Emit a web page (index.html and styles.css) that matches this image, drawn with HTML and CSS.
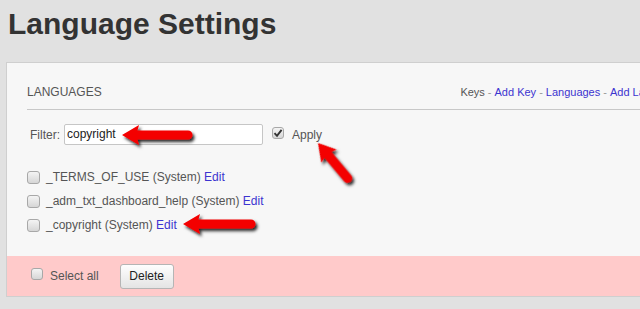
FILE: index.html
```html
<!DOCTYPE html>
<html>
<head>
<meta charset="utf-8">
<link rel="stylesheet" href="styles.css">
</head>
<body>
<h1 class="title">Language Settings</h1>
<div class="panel">
  <div class="panel-body">
    <div class="panel-head">
      <span class="caption">LANGUAGES</span>
      <nav class="links"><span class="cur">Keys</span><span class="sep">-</span><a class="lnk">Add Key</a><span class="sep">-</span><a class="lnk">Languages</a><span class="sep">-</span><a class="lnk">Add Languages</a></nav>
    </div>
    <div class="filter">
      <span class="flabel">Filter:</span>
      <span class="finput">copyright</span>
      <span class="cb checked"><svg width="10" height="10" viewBox="0 0 10 10"><path d="M1.5 5.2 L4 7.8 L8.6 1.8" fill="none" stroke="#333" stroke-width="1.9"/></svg></span>
      <span class="apply">Apply</span>
    </div>
    <ul class="rows">
      <li class="row"><span class="cb"></span><span class="rtext">_TERMS_OF_USE (System) <a class="lnk">Edit</a></span></li>
      <li class="row"><span class="cb"></span><span class="rtext">_adm_txt_dashboard_help (System) <a class="lnk">Edit</a></span></li>
      <li class="row"><span class="cb"></span><span class="rtext">_copyright (System) <a class="lnk">Edit</a></span></li>
    </ul>
  </div>
  <div class="footer">
    <span class="cb cb-all"></span>
    <span class="selall">Select all</span>
    <span class="btn">Delete</span>
  </div>
</div>
<svg class="marks" width="640" height="309" viewBox="0 0 640 309">
  <defs>
    <filter id="sh" x="-30%" y="-50%" width="160%" height="200%">
      <feDropShadow dx="2" dy="2.5" stdDeviation="1.4" flood-color="#000" flood-opacity="0.85"/>
    </filter>
  </defs>
  <g filter="url(#sh)" fill="#f40000">
    <path transform="translate(122 135)" d="M0 0 L17 -10 L15.5 -4.5 L66 -4.5 A4.5 4.5 0 0 1 66 4.5 L15.5 4.5 L17 10 Z"/>
    <path transform="translate(318 143) rotate(50)" d="M0 0 L17 -10 L15.5 -4.5 L46 -4.5 A4.5 4.5 0 0 1 46 4.5 L15.5 4.5 L17 10 Z"/>
    <path transform="translate(183 224)" d="M0 0 L17 -10 L15.5 -4.5 L68 -4.5 A4.5 4.5 0 0 1 68 4.5 L15.5 4.5 L17 10 Z"/>
  </g>
</svg>
</body>
</html>
```
FILE: styles.css
```css
html, body {
  margin: 0;
  padding: 0;
  overflow: hidden;
  width: 640px;
  height: 309px;
}
body {
  position: relative;
  background: #e1e1e1;
  font-family: "Liberation Sans", Arial, sans-serif;
  font-size: 12px;
  color: #555;
}
.title {
  margin: 7px 0 21px 8px;
  font-size: 30px;
  line-height: 34px;
  font-weight: bold;
  color: #333;
}
.panel {
  margin-left: 6px;
  width: 706px;
  background: #f7f7f7;
  border: 1px solid #cfcfcf;
}
.panel-body {
  padding: 0 20px;
}
.panel-head {
  display: flex;
  justify-content: space-between;
  align-items: center;
  padding: 22px 0 10px;
  line-height: 14px;
  border-bottom: 1px solid #c8c8c8;
}
.caption {
  color: #555;
}
.links {
  display: flex;
  font-size: 11px;
  padding-right: 6px;
}
.cur { color: #555; }
.sep {
  color: #999;
  padding: 0 3px;
}
.lnk {
  color: #3c34d0;
  text-decoration: none;
}
.filter {
  display: flex;
  align-items: center;
  margin-top: 14px;
  padding-left: 3px;
  height: 21px;
}
.flabel { margin-right: 4px; }
.finput {
  box-sizing: border-box;
  width: 199px;
  height: 21px;
  line-height: 19px;
  padding-left: 2px;
  background: #fff;
  border: 1px solid #c6c6c6;
  border-radius: 2px;
  color: #222;
  margin-right: 9px;
}
.cb {
  box-sizing: border-box;
  display: inline-flex;
  align-items: center;
  justify-content: center;
  width: 12px;
  height: 12px;
  border: 1px solid #a8a8a8;
  border-radius: 3px;
  background: linear-gradient(#f4f4f4, #d6d6d6);
  flex: none;
}
.checked {
  margin-right: 8px;
  margin-top: -3px;
}
.apply { color: #555; }
.rows {
  list-style: none;
  margin: 20px 0 0;
  padding: 0 0 19px;
}
.row {
  display: flex;
  align-items: center;
  height: 24px;
}
.row .cb {
  width: 13px;
  height: 13px;
  margin-right: 6px;
}
.rtext { line-height: 14px; }
.footer {
  display: flex;
  align-items: center;
  height: 40px;
  padding-left: 24px;
  background: #ffcaca;
}
.cb-all {
  margin-right: 7px;
  margin-top: -5px;
}
.selall { margin-right: 21px; }
.btn {
  box-sizing: border-box;
  width: 54px;
  height: 25px;
  line-height: 23px;
  text-align: center;
  color: #222;
  border: 1px solid #b5b5b5;
  border-radius: 3px;
  background: linear-gradient(#fefefe, #e4e4e4);
}
.marks {
  position: absolute;
  left: 0;
  top: 0;
  pointer-events: none;
}
```
